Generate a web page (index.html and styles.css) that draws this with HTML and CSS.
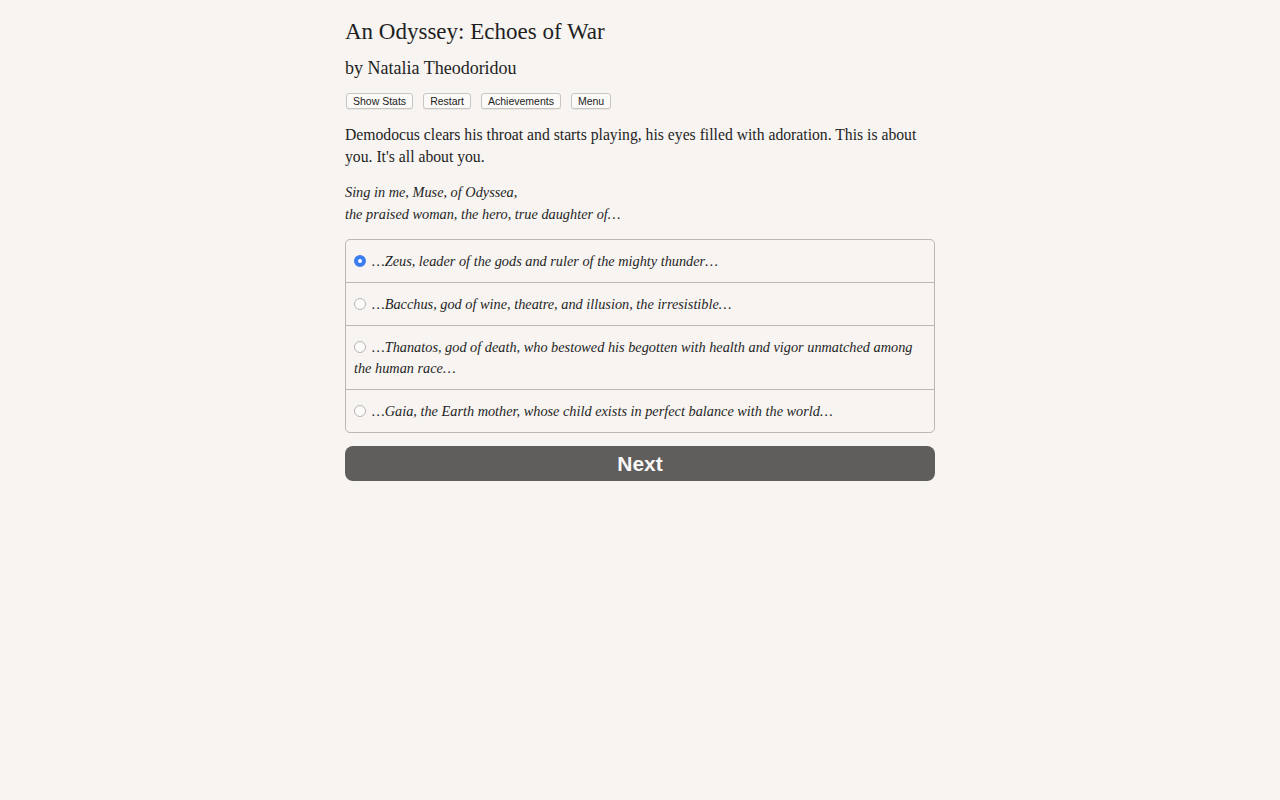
FILE: index.html
```html
<!DOCTYPE html>
<html lang="en">
<head>
<meta charset="utf-8">
<title>An Odyssey: Echoes of War</title>
<link rel="stylesheet" href="styles.css">
</head>
<body>
<main class="page">
  <h1 class="title">An Odyssey: Echoes of War</h1>
  <h2 class="author">by Natalia Theodoridou</h2>
  <nav class="toolbar">
    <button class="tool-btn">Show Stats</button>
    <button class="tool-btn">Restart</button>
    <button class="tool-btn">Achievements</button>
    <button class="tool-btn">Menu</button>
  </nav>
  <p class="text">Demodocus clears his throat and starts playing, his eyes filled with adoration. This is about you. It's all about you.</p>
  <p class="text verse"><i>Sing in me, Muse, of Odyssea,<br>the praised woman, the hero, true daughter of…</i></p>
  <form class="choices">
    <label class="choice"><span class="radio checked"></span><i>…Zeus, leader of the gods and ruler of the mighty thunder…</i></label>
    <label class="choice"><span class="radio"></span><i>…Bacchus, god of wine, theatre, and illusion, the irresistible…</i></label>
    <label class="choice"><span class="radio"></span><i>…Thanatos, god of death, who bestowed his begotten with health and vigor unmatched among the human race…</i></label>
    <label class="choice"><span class="radio"></span><i>…Gaia, the Earth mother, whose child exists in perfect balance with the world…</i></label>
  </form>
  <button class="next">Next</button>
</main>
</body>
</html>
```
FILE: styles.css
```css
html, body {
  margin: 0;
  padding: 0;
  background: #f7f4f1;
}
body {
  font-family: "Liberation Serif", "DejaVu Serif", serif;
  color: #1f1f1f;
}
.page {
  width: 590px;
  margin: 0 auto;
  padding-top: 17px;
}
.title {
  font-size: 23px;
  font-weight: normal;
  margin: 0;
  line-height: 30px;
}
.author {
  font-size: 18px;
  font-weight: normal;
  margin: 9px 0 0;
  line-height: 24px;
}
.toolbar {
  display: flex;
  gap: 10px;
  margin-top: 13px;
  padding-left: 1px;
}
.tool-btn {
  font-family: "Liberation Sans", Arial, sans-serif;
  font-size: 10.5px;
  color: #222;
  background: #fbfaf8;
  border: 1px solid #c9c6c2;
  border-radius: 3px;
  padding: 1px 6px 1px;
  height: 16px;
  line-height: 12px;
  box-shadow: 0 1px 1px rgba(0,0,0,0.06);
}
.text {
  font-size: 15.7px;
  line-height: 22px;
  margin: 15px 0 0;
}
.verse {
  margin-top: 13px;
}
.verse i {
  font-size: 14.3px;
}
.choices {
  margin-top: 14px;
  border: 1px solid #bcb9b5;
  border-radius: 5px;
}
.choice {
  display: block;
  font-size: 14.3px;
  line-height: 21px;
  padding: 10.5px 12px 10.5px 8px;
  border-top: 1px solid #bcb9b5;
}
.choice:first-child {
  border-top: none;
}
.radio {
  display: inline-block;
  width: 12px;
  height: 12px;
  border-radius: 50%;
  border: 1px solid #b9b7b4;
  background: #fbfbfa;
  box-sizing: border-box;
  margin-right: 6px;
  vertical-align: -1px;
}
.radio.checked {
  border: 4px solid #3b7df0;
  background: #fff;
}
.next {
  display: block;
  width: 100%;
  margin-top: 13px;
  height: 35px;
  border: none;
  border-radius: 8px;
  background: #5f5e5c;
  color: #f9f8f6;
  font-family: "Liberation Sans", Arial, sans-serif;
  font-weight: bold;
  font-size: 21px;
}
```
